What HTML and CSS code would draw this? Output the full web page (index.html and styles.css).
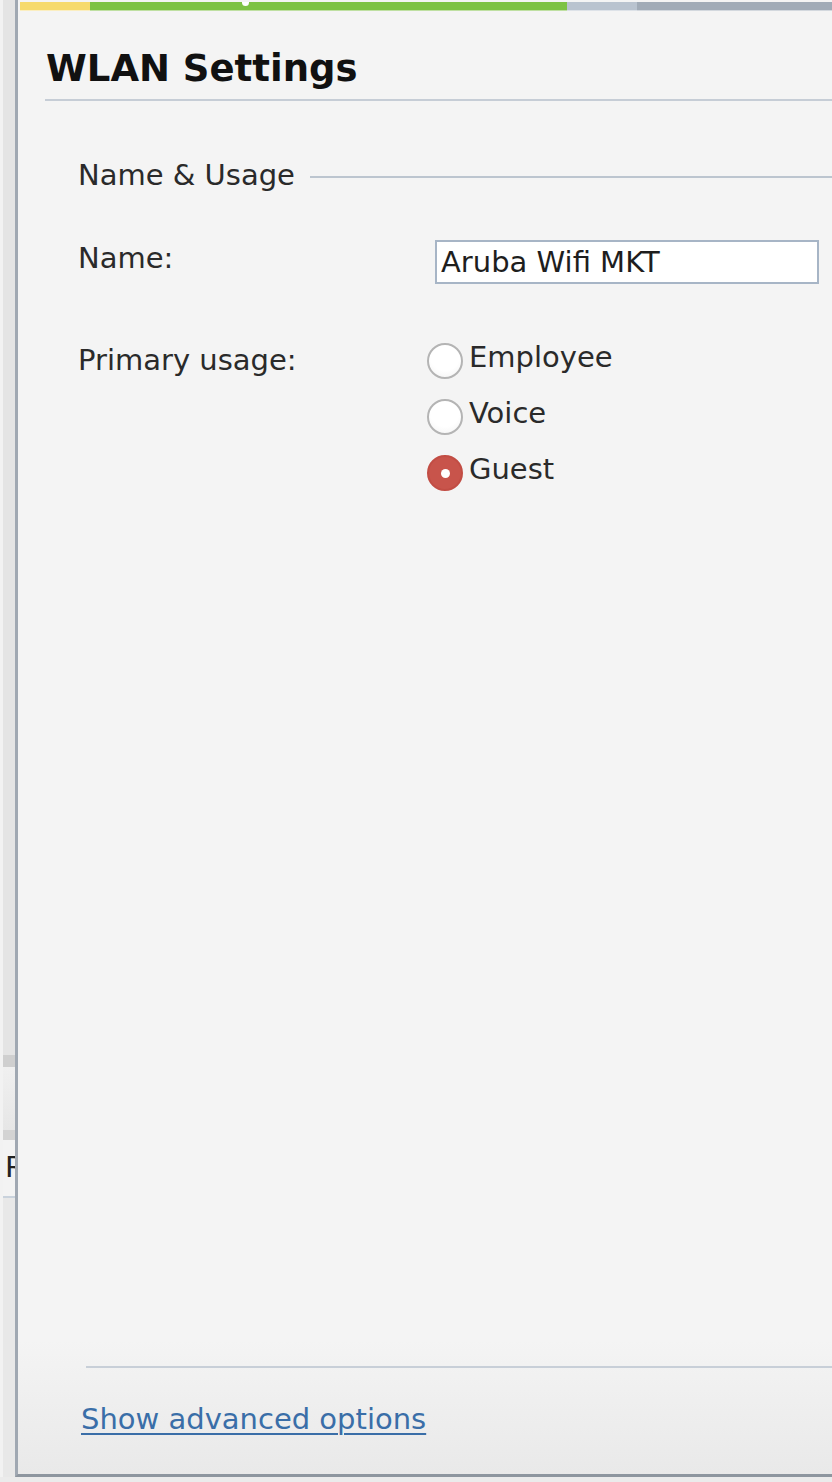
FILE: index.html
```html
<!DOCTYPE html>
<html lang="en">
<head>
<meta charset="utf-8">
<title>WLAN Settings</title>
<link rel="stylesheet" href="styles.css">
</head>
<body>
<div class="frame">
  <aside class="side">
    <div class="side-top"></div>
    <div class="side-band"></div>
    <div class="side-row"></div>
    <div class="side-band light"></div>
    <div class="side-r">R</div>
    <div class="side-rest"></div>
  </aside>
  <main class="panel">
    <div class="progress">
      <span class="seg seg-yellow"></span>
      <span class="seg seg-green"><span class="tick"></span></span>
      <span class="seg seg-light"></span>
      <span class="seg seg-grey"></span>
    </div>
    <h1 class="title">WLAN Settings</h1>
    <section class="group">
      <div class="legend"><span class="legend-text">Name &amp; Usage</span><span class="legend-rule"></span></div>
      <div class="row row-name">
        <label class="label" for="name">Name:</label>
        <input class="text-input" id="name" type="text" value="Aruba Wifi MKT">
      </div>
      <div class="row row-usage">
        <span class="label label-usage">Primary usage:</span>
        <div class="radios">
          <div class="radio"><span class="dot"></span><span class="radio-text">Employee</span></div>
          <div class="radio"><span class="dot"></span><span class="radio-text">Voice</span></div>
          <div class="radio"><span class="dot checked"></span><span class="radio-text">Guest</span></div>
        </div>
      </div>
    </section>
    <footer class="foot">
      <div class="foot-rule"></div>
      <a class="adv" href="#">Show advanced options</a>
    </footer>
  </main>
</div>
</body>
</html>
```

FILE: styles.css
```css
* { box-sizing: border-box; }
html, body { margin: 0; padding: 0; }
body {
  background: #ebebeb;
  font-family: "DejaVu Sans", Verdana, sans-serif;
  color: #222;
  width: 832px;
  height: 1482px;
  overflow: hidden;
}
.frame {
  display: flex;
  height: 1477px;
}
.side {
  width: 15px;
  flex: none;
  display: flex;
  flex-direction: column;
  border-left: 3px solid #f2f2f2;
  background: #e4e4e4;
  overflow: hidden;
}
.side-top { height: 1055px; background: #e4e4e4; }
.side-band { height: 12px; background: #cfcfcf; }
.side-band.light { height: 10px; background: #d3d3d3; }
.side-row { height: 63px; background: linear-gradient(#f0f0f0, #e6e6e6); }
.side-r {
  height: 58px;
  background: #f3f3f3;
  border-bottom: 2px solid #c9d2dc;
  font-size: 29px;
  line-height: 34px;
  padding-top: 10px;
  padding-left: 2px;
  color: #222;
  white-space: nowrap;
}
.side-rest { flex: 1; background: #e8e8e8; }

.panel {
  flex: 1;
  display: flex;
  flex-direction: column;
  border-left: 3px solid #a0a8b2;
  border-bottom: 3px solid #8e969f;
  background: linear-gradient(#f4f4f4 0, #f4f4f4 1340px, #e9e9e9 100%);
  min-width: 0;
}
.progress {
  display: flex;
  margin-top: 2px;
  padding-left: 2px;
  height: 9px;
}
.seg { height: 9px; display: block; border-bottom: 1px solid transparent; }
.seg-yellow { width: 70px; background: #f6da6c; border-bottom-color: #fbeec0; }
.seg-green { width: 477px; background: #7dc243; border-bottom-color: #bfe0a2; position: relative; }
.seg-light { width: 70px; background: #b9c3cf; border-bottom-color: #dde2e8; }
.seg-grey { flex: 1; background: #a1abb7; border-bottom-color: #d3d8de; }
.tick {
  position: absolute;
  left: 152px;
  top: 0;
  width: 7px;
  height: 4px;
  background: #fff;
  border-radius: 0 0 4px 4px;
}
.title {
  margin: 36px 0 0 27px;
  font-size: 37px;
  line-height: 44px;
  font-weight: bold;
  color: #111;
  padding: 0 0 8px 1px;
  border-bottom: 2px solid #c6cdd6;
}
.group {
  margin-left: 60px;
  display: flex;
  flex-direction: column;
}
.legend {
  display: flex;
  align-items: center;
  margin-top: 57px;
  height: 34px;
}
.legend-text {
  font-size: 29px;
  line-height: 34px;
  color: #2a2a2a;
  white-space: nowrap;
}
.legend-rule {
  flex: 1;
  height: 2px;
  margin-left: 15px;
  margin-top: 4px;
  background: #bcc5cf;
}
.row {
  display: flex;
  align-items: flex-start;
}
.row-name { margin-top: 48px; }
.label {
  width: 357px;
  flex: none;
  font-size: 29px;
  line-height: 34px;
  color: #2a2a2a;
  margin-top: 1px;
}
.text-input {
  width: 384px;
  height: 44px;
  border: 2px solid #a7b5c6;
  background: #fff;
  font-family: "DejaVu Sans", Verdana, sans-serif;
  font-size: 29px;
  color: #1e1e1e;
  padding: 0 0 0 4px;
  margin: 0;
  outline: none;
}
.row-usage { margin-top: 56px; }
.label-usage { margin-top: 3px; }
.radios {
  display: flex;
  flex-direction: column;
  gap: 22px;
  margin-left: -8px;
}
.radio {
  display: flex;
  align-items: flex-start;
  gap: 6px;
  height: 34px;
}
.dot {
  width: 36px;
  height: 36px;
  flex: none;
  margin-top: 3px;
  border-radius: 50%;
  border: 2px solid #b4b4b4;
  background: radial-gradient(circle at 50% 35%, #ffffff 55%, #f1f1f1 100%);
  display: flex;
  align-items: center;
  justify-content: center;
}
.dot.checked {
  border-color: #c24d44;
  background: #c8544b;
}
.dot.checked::after {
  content: "";
  width: 9px;
  height: 9px;
  border-radius: 50%;
  background: #fff;
}
.radio-text {
  font-size: 29px;
  line-height: 34px;
  color: #2a2a2a;
}
.foot {
  margin-top: auto;
  display: flex;
  flex-direction: column;
}
.foot-rule {
  margin-left: 68px;
  height: 2px;
  background: #c8cfd8;
}
.adv {
  margin: 34px 0 38px 63px;
  font-size: 29px;
  line-height: 34px;
  color: #3a6ea8;
  text-decoration: underline;
  text-underline-offset: 4px;
  text-decoration-thickness: 2px;
  align-self: flex-start;
}
```
